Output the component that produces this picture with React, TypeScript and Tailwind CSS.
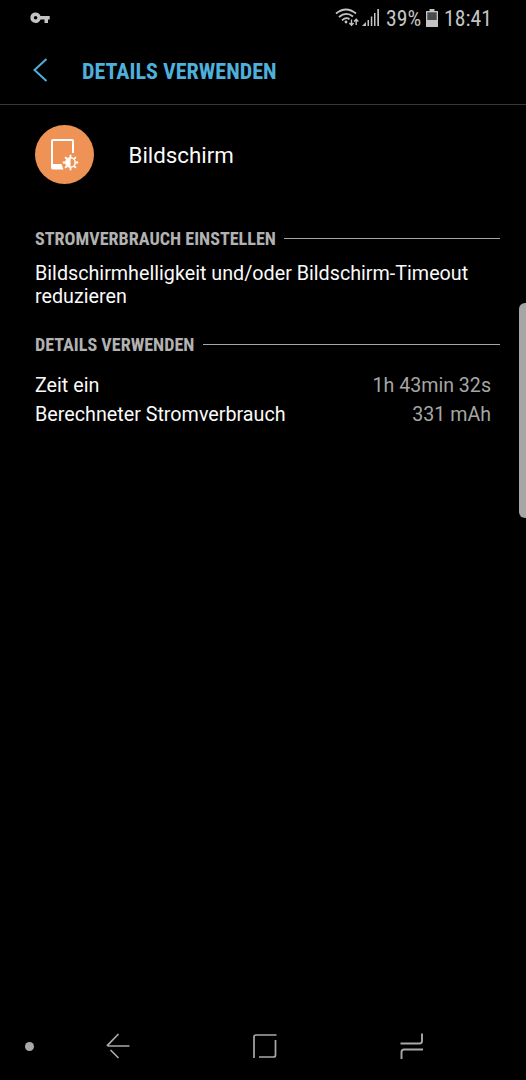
import type { ReactNode } from 'react'

interface UsageRow {
  label: string
  value: string
}

const USAGE_ROWS: UsageRow[] = [
  { label: 'Zeit ein', value: '1h 43min 32s' },
  { label: 'Berechneter Stromverbrauch', value: '331 mAh' },
]

function StatusBar() {
  return (
    <div className="flex h-9 shrink-0 items-center justify-between pr-[34px] pl-[30px] text-[#c4c4c4]">
      <svg width="20" height="12" viewBox="0 0 20 12" fill="currentColor" aria-hidden="true">
        <path
          fillRule="evenodd"
          d="M5.6 0.5a5.2 5.2 0 1 0 4.9 7H14.5V11H18V7.500H19.700V4H10.500A5.200 5.200 0 0 0 5.600 0.500ZM5.600 4a1.800 1.800 0 1 1 0 3.600a1.800 1.800 0 0 1 0-3.600Z"
        />
      </svg>
      <div className="flex items-center font-['Roboto_Condensed',Roboto,sans-serif] text-[21.700px] font-stretch-condensed">
        <svg width="24" height="20" viewBox="0 0 24 20" fill="none" stroke="currentColor" aria-hidden="true">
          <path d="M1 5.500Q11 -2.500 21 5.500M4 9Q11 3 18 8.500M7 12.300Q11 8.700 14.500 11.200" strokeWidth="1.800" />
          <circle cx="11" cy="14" r="1.400" fill="currentColor" stroke="none" />
          <path d="M16.500 11.500V17M14.400 15L16.500 17.300L18.600 15M21.200 17V11.500M19.100 13.500L21.200 11.200L23.300 13.500" strokeWidth="1.400" />
        </svg>
        <svg className="ml-[3px]" width="18" height="20" viewBox="0 0 18 20" fill="currentColor" aria-hidden="true">
          <path d="M0 18L4 14V18ZM5.500 12H7V18H5.500ZM8.800 8.500H10.300V18H8.800ZM12 5H13.500V18H12ZM15.300 1H17V18H15.300Z" />
        </svg>
        <span className="ml-[6px] pt-[2px]">39%</span>
        <svg className="ml-[5px]" width="12" height="18" viewBox="0 0 12 18" aria-hidden="true">
          <path d="M3.500 0H8.500V2H12V18H0V2H3.500Z" fill="#c4c4c4" />
          <path d="M1.300 3.300H10.700V11H1.300Z" fill="#4a4a4a" />
        </svg>
        <span className="ml-[6px] pt-[2px]">18:41</span>
      </div>
    </div>
  )
}

function ScreenIcon() {
  return (
    <div className="flex size-[59px] shrink-0 items-center justify-center rounded-full bg-[#ef9255]">
      <svg width="59" height="59" viewBox="0 0 59 59" fill="none" stroke="#fff" aria-hidden="true">
        <path d="M38 28V16Q38 15 37 15H18Q17 15 17 16V43" strokeWidth="2" />
        <path d="M16 39H26.500L28.500 44.500H18Q16 44.500 16 42.500Z" fill="#fff" stroke="none" />
        <circle cx="35.500" cy="37.500" r="4.700" strokeWidth="1.500" />
        <path d="M35.500 32.800a4.700 4.700 0 0 0 0 9.400Z" fill="#fff" stroke="none" />
        <path
          d="M35.500 29.800V32.500M35.500 42.500V45.200M27.800 37.500H30.500M40.500 37.500H43.200M30.100 32.100L32 34M39 41L40.900 42.900M30.100 42.900L32 41M39 34L40.900 32.100"
          strokeWidth="1.800"
        />
      </svg>
    </div>
  )
}

function SectionHeading({ children }: { children: ReactNode }) {
  return (
    <div className="flex h-6 items-center gap-[8.500px] pr-[26px]">
      <h2 className="font-['Roboto_Condensed',Roboto,sans-serif] text-[18.100px] leading-6 font-bold whitespace-nowrap text-[#b2b2b2] font-stretch-condensed">
        {children}
      </h2>
      <div className="mb-[2px] h-px flex-1 bg-[#a6a6a6]" />
    </div>
  )
}

function NavigationBar() {
  return (
    <nav className="mt-auto flex h-[68px] shrink-0 items-center pl-[25px] text-[#a9a9a9]">
      <div className="size-[9px] rounded-full bg-[#a9a9a9]" />
      <svg className="ml-[72px]" width="24" height="26" viewBox="0 0 24 26" fill="none" stroke="currentColor" strokeWidth="1.700" aria-hidden="true">
        <path d="M12.500 1L1.500 12.300L2.300 13H23.500M4.500 17L12.500 25" />
      </svg>
      <svg className="ml-[123px]" width="24" height="26" viewBox="0 0 24 26" fill="none" stroke="currentColor" strokeWidth="1.700" aria-hidden="true">
        <path d="M1 25V4Q1 2 3 2H23.500M22.500 7V22Q22.500 24 20.500 24H6" />
      </svg>
      <svg className="ml-[123px]" width="24" height="27" viewBox="0 0 24 27" fill="none" stroke="currentColor" strokeWidth="1.900" aria-hidden="true">
        <path d="M0.500 10.500H19.500Q22 10.500 22 8V0.500M23 16.500H4Q1.500 16.500 1.500 19V26" />
      </svg>
    </nav>
  )
}

export default function App() {
  return (
    <div className="relative flex h-[1080px] w-[526px] flex-col overflow-hidden bg-black font-[Roboto,sans-serif] text-[#fafafa]">
      <StatusBar />

      <header className="flex h-[69px] shrink-0 items-center border-b border-[#383838] pl-8">
        <svg width="16" height="24" viewBox="0 0 16 24" fill="none" stroke="#4eb1dc" strokeWidth="2" aria-hidden="true">
          <path d="M14.500 1L2.500 12L14.500 23" />
        </svg>
        <h1 className="ml-[34px] pt-[3px] font-['Roboto_Condensed',Roboto,sans-serif] text-[22.100px] font-bold text-[#4eb1dc] font-stretch-condensed">
          DETAILS VERWENDEN
        </h1>
      </header>

      <main className="pt-5 pl-[35px]">
        <div className="flex items-center gap-[34.500px]">
          <ScreenIcon />
          <p className="pt-[2px] text-[22.300px]">Bildschirm</p>
        </div>

        <section className="mt-[43px]">
          <SectionHeading>STROMVERBRAUCH EINSTELLEN</SectionHeading>
          <p className="mt-[11px] pr-[35px] text-[19.730px] leading-[23px]">
            Bildschirmhelligkeit und/oder Bildschirm-Timeout reduzieren
          </p>
        </section>

        <section className="mt-[25px]">
          <SectionHeading>DETAILS VERWENDEN</SectionHeading>
          <dl className="mt-[14px] pr-[35px] text-[19.730px] leading-[29px]">
            {USAGE_ROWS.map((row) => (
              <div key={row.label} className="flex justify-between">
                <dt>{row.label}</dt>
                <dd className="text-[19.600px] text-[#a6a6a6]">{row.value}</dd>
              </div>
            ))}
          </dl>
        </section>
      </main>

      <div className="absolute top-[303px] right-0 h-[215px] w-[7px] rounded-l-[6px] bg-[#a6a6a6]" />

      <NavigationBar />
    </div>
  )
}
